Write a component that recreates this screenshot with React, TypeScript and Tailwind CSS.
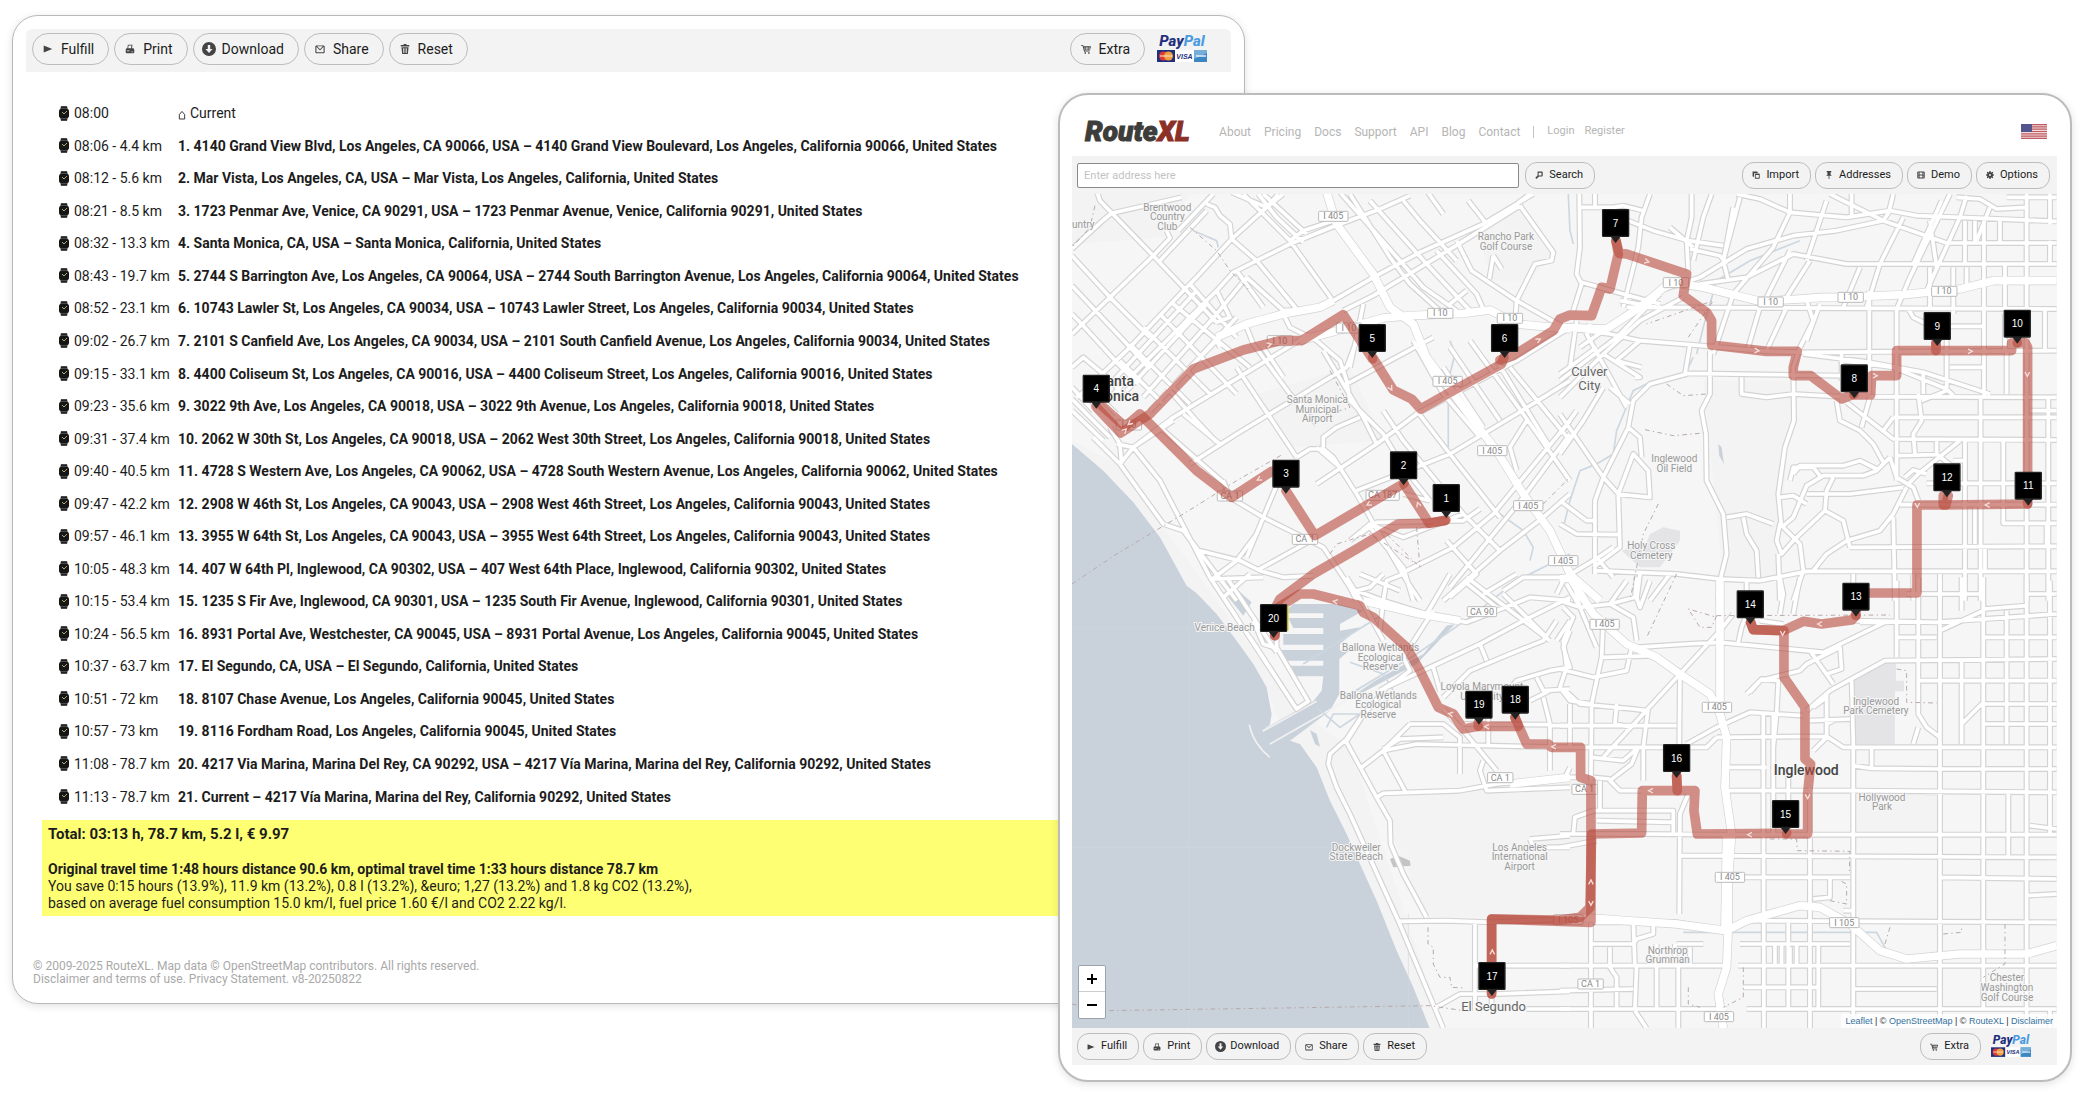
import React from "react";
import classNames from "clsx";

type IconName =
  | "play"
  | "print"
  | "download"
  | "mail"
  | "trash"
  | "cart"
  | "search"
  | "copy"
  | "pin"
  | "film"
  | "gear";

const ICONS: Record<IconName, React.ReactNode> = {
  play: <path d="M1 2v10l12-5z" />,
  print: (
    <path
      fillRule="evenodd"
      d="M4 1h6.500l-.7 5H12l1 2v4l-1 1H2l-1-1V8l1-2h1.300zM5 2.200 4.500 6h4L9 2.200zM2.500 9v1h4V9zM9 10.500v1h2v-1z"
    />
  ),
  download: (
    <path
      fillRule="evenodd"
      d="M7 0a7 7 0 1 1 0 14A7 7 0 0 1 7 0zM5.800 3v4H3.500L7 11l3.500-4H8.200V3z"
    />
  ),
  mail: (
    <path
      fillRule="evenodd"
      d="M1.500 2h11l1 1v9l-1 1h-11l-1-1V3zM2 4v7.500h10V4L7 9zM3 3.300l4 3.900 4-3.900z"
    />
  ),
  trash: (
    <path
      fillRule="evenodd"
      d="M5 0h4v1.500h4v2H1v-2h4zM2 4.500h10L11 14H3zM4.200 6l.4 6.500h.9L5.300 6zM6.500 6v6.500h1V6zM8.700 6l-.2 6.500h.9L9.800 6z"
    />
  ),
  cart: (
    <path
      fillRule="evenodd"
      d="M0 1.500h3l.5 1.700H14L12.500 9H5l.3 1H12v1H4.300L2.200 2.600H0zM5 4.500V8h1V4.500zM7 4.500V8h1V4.500zM9 4.500V8h1V4.500zM11 4.500V8h1V4.500zM5 11.500h2v2H5zM10 11.500h2v2h-2z"
    />
  ),
  search: (
    <path
      fillRule="evenodd"
      d="M5 1h7.500l1 1v6l-1 1.500H7L2.500 14 .5 12l4-4V1.500zM6.300 3v4.700h5V3z"
    />
  ),
  copy: (
    <path
      fillRule="evenodd"
      d="M1 1h8l1 1v1.500H5L3.500 5v5H2L1 9zM6 4.500h6.500l1 1v7l-1 1H6l-1-1v-7zM6.500 7v5H12V7z"
    />
  ),
  pin: <path d="M3 0h8v2H9.700v4L12 8.500H7.700V14H6.300V8.500H2L4.300 6V2H3z" />,
  film: (
    <path
      fillRule="evenodd"
      d="M1.500 1h11l1 1v10l-1 1h-11l-1-1V2zM4.500 2.500v3.700h5V2.500zM4.500 7.800v3.700h5V7.800zM1.800 3v1.300h1.400V3zM1.800 6.300v1.300h1.400V6.300zM1.800 9.600v1.300h1.400V9.600zM10.800 3v1.300h1.400V3zM10.800 6.300v1.300h1.400V6.300zM10.800 9.600v1.300h1.400V9.600z"
    />
  ),
  gear: (
    <path
      fillRule="evenodd"
      d="M6 0h2l.4 2 1.300.5L11.400 1.300 12.700 2.700 11.500 4.400 12 5.600 14 6v2l-2 .4-.5 1.300 1.200 1.700-1.400 1.300-1.700-1.200-1.200.5L8 14H6l-.4-2-1.300-.5-1.700 1.200-1.300-1.400 1.200-1.700L2 8.400 0 8V6l2-.4.5-1.300L1.300 2.600 2.700 1.300l1.700 1.200L5.600 2zM7 5.300a1.700 1.700 0 1 0 0 3.400 1.700 1.700 0 0 0 0-3.400z"
    />
  ),
};

interface ToolButtonProps {
  icon: IconName;
  small?: boolean;
  children: React.ReactNode;
}

const ToolButton = ({ icon, small, children }: ToolButtonProps) => (
  <button
    type="button"
    className={classNames(
      "flex shrink-0 items-center border border-[#bdbdbd] text-[#1c1c1c]",
      small
        ? "h-[27px] gap-[5px] rounded-xl pl-2 pr-[11px] text-[11px]"
        : "h-8 gap-[6px] rounded-2xl pl-2 pr-[14px] text-sm"
    )}
  >
    <span
      className={classNames(
        "flex items-center justify-center",
        small ? "w-[10px]" : "w-[14px]"
      )}
    >
      <svg
        viewBox="0 0 14 14"
        fill="#444"
        aria-hidden="true"
        className={classNames("shrink-0", {
          "size-[14px]": !small && icon === "download",
          "size-[11px]": small === (icon === "download"),
          "size-[10px]": !small && icon !== "download",
          "size-[8px]": small && icon !== "download",
        })}
      >
        {ICONS[icon]}
      </svg>
    </span>
    {children}
  </button>
);

const PaymentBadge = ({ className }: { className: string }) => (
  <svg viewBox="0 0 50 28" className={classNames("overflow-visible", className)} role="img" aria-label="PayPal">
    <text
      x="25"
      y="11"
      textAnchor="middle"
      fontFamily="Roboto, sans-serif"
      fontStyle="italic"
      fontWeight="800"
      fontSize="15"
      fill="#1f2f7d"
    >
      Pay<tspan fill="#4a9be0">Pal</tspan>
    </text>
    <rect y="15" width="18" height="12" fill="#22307c" />
    <circle cx="6.500" cy="21" r="4.500" fill="#dd3a35" />
    <circle cx="11.500" cy="21" r="4.500" fill="#f0a040" />
    <rect x="3" y="20" width="12" height="2" fill="#f6d9c0" opacity=".6" />
    <rect x="18" y="15" width="19" height="12" fill="#fff" />
    <text
      x="27.500"
      y="24"
      textAnchor="middle"
      fontFamily="Liberation Sans, sans-serif"
      fontStyle="italic"
      fontWeight="700"
      fontSize="7"
      fill="#1f2f7d"
    >
      VISA
    </text>
    <rect x="37" y="15" width="13" height="12" fill="#3c86c4" />
    <path d="M37 15h13v3l-13 6z" fill="#8fbfe4" opacity=".7" />
    <rect x="39" y="20" width="10" height="2" fill="#dcebf7" opacity=".8" />
  </svg>
);

const ActionBar = ({ small }: { small?: boolean }) => (
  <div
    className={classNames("flex items-center bg-[#f3f3f3]", {
      "h-[37px] gap-1 pl-[5px] pr-[26px]": small,
      "h-[43px] gap-[5px] rounded-t-md pb-[3px] pl-[6px] pr-6": !small,
    })}
  >
    <ToolButton icon="play" small={small}>Fulfill</ToolButton>
    <ToolButton icon="print" small={small}>Print</ToolButton>
    <ToolButton icon="download" small={small}>Download</ToolButton>
    <ToolButton icon="mail" small={small}>Share</ToolButton>
    <ToolButton icon="trash" small={small}>Reset</ToolButton>
    <span className="flex-1" />
    <ToolButton icon="cart" small={small}>Extra</ToolButton>
    <PaymentBadge className={small ? "ml-[6px] h-[23px] w-10" : "ml-[7px] h-7 w-[50px]"} />
  </div>
);

const STOPS: [string, string][] = [
  ["08:00", "Current"],
  ["08:06 - 4.4 km", "1. 4140 Grand View Blvd, Los Angeles, CA 90066, USA – 4140 Grand View Boulevard, Los Angeles, California 90066, United States"],
  ["08:12 - 5.6 km", "2. Mar Vista, Los Angeles, CA, USA – Mar Vista, Los Angeles, California, United States"],
  ["08:21 - 8.5 km", "3. 1723 Penmar Ave, Venice, CA 90291, USA – 1723 Penmar Avenue, Venice, California 90291, United States"],
  ["08:32 - 13.3 km", "4. Santa Monica, CA, USA – Santa Monica, California, United States"],
  ["08:43 - 19.7 km", "5. 2744 S Barrington Ave, Los Angeles, CA 90064, USA – 2744 South Barrington Avenue, Los Angeles, California 90064, United States"],
  ["08:52 - 23.1 km", "6. 10743 Lawler St, Los Angeles, CA 90034, USA – 10743 Lawler Street, Los Angeles, California 90034, United States"],
  ["09:02 - 26.7 km", "7. 2101 S Canfield Ave, Los Angeles, CA 90034, USA – 2101 South Canfield Avenue, Los Angeles, California 90034, United States"],
  ["09:15 - 33.1 km", "8. 4400 Coliseum St, Los Angeles, CA 90016, USA – 4400 Coliseum Street, Los Angeles, California 90016, United States"],
  ["09:23 - 35.6 km", "9. 3022 9th Ave, Los Angeles, CA 90018, USA – 3022 9th Avenue, Los Angeles, California 90018, United States"],
  ["09:31 - 37.4 km", "10. 2062 W 30th St, Los Angeles, CA 90018, USA – 2062 West 30th Street, Los Angeles, California 90018, United States"],
  ["09:40 - 40.5 km", "11. 4728 S Western Ave, Los Angeles, CA 90062, USA – 4728 South Western Avenue, Los Angeles, California 90062, United States"],
  ["09:47 - 42.2 km", "12. 2908 W 46th St, Los Angeles, CA 90043, USA – 2908 West 46th Street, Los Angeles, California 90043, United States"],
  ["09:57 - 46.1 km", "13. 3955 W 64th St, Los Angeles, CA 90043, USA – 3955 West 64th Street, Los Angeles, California 90043, United States"],
  ["10:05 - 48.3 km", "14. 407 W 64th Pl, Inglewood, CA 90302, USA – 407 West 64th Place, Inglewood, California 90302, United States"],
  ["10:15 - 53.4 km", "15. 1235 S Fir Ave, Inglewood, CA 90301, USA – 1235 South Fir Avenue, Inglewood, California 90301, United States"],
  ["10:24 - 56.5 km", "16. 8931 Portal Ave, Westchester, CA 90045, USA – 8931 Portal Avenue, Los Angeles, California 90045, United States"],
  ["10:37 - 63.7 km", "17. El Segundo, CA, USA – El Segundo, California, United States"],
  ["10:51 - 72 km", "18. 8107 Chase Avenue, Los Angeles, California 90045, United States"],
  ["10:57 - 73 km", "19. 8116 Fordham Road, Los Angeles, California 90045, United States"],
  ["11:08 - 78.7 km", "20. 4217 Via Marina, Marina Del Rey, CA 90292, USA – 4217 Vía Marina, Marina del Rey, California 90292, United States"],
  ["11:13 - 78.7 km", "21. Current – 4217 Vía Marina, Marina del Rey, California 90292, United States"],
];

const WatchIcon = () => (
  <svg viewBox="0 0 10 15" className="h-[15px] w-[10px] shrink-0" aria-hidden="true">
    <path d="M2 0h6l1 4v7l-1 4H2l-1-4V4z" fill="#4a4a4a" />
    <path d="M2 1.500h6M2 13.500h6" stroke="#222" />
    <rect y="3" width="10" height="9" rx="2" fill="#161616" />
    <path d="M3 6l2 2 3-3" stroke="#b9a878" fill="none" />
  </svg>
);

const HomeIcon = () => (
  <svg viewBox="0 0 9 10" className="mr-1 inline h-[10px] w-2" aria-hidden="true">
    <path d="M1.500 9.500V4.500L4.500 1l3 3.500v5z" fill="none" stroke="#222" />
  </svg>
);

const Itinerary = () => (
  <section className="ml-3 mt-[15px] flex w-[59%] shrink-0 flex-col self-start rounded-[26px] border border-[#b9b9b9] bg-white px-[13px] pb-[17px] pt-[13px] shadow-[0_2px_8px_rgba(0,0,0,0.12)]">
    <ActionBar />
    <table className="ml-[33px] mt-[25px] h-[716px] border-collapse self-start whitespace-nowrap text-sm text-[#1c1c1c]">
      <tbody>
        {STOPS.map(([time, address], i) => (
          <tr key={address}>
            <td className="w-[119px] p-0">
              <span className="flex items-center gap-[5px]">
                <WatchIcon />
                {time}
              </span>
            </td>
            <td className={classNames("p-0", { "font-bold": i > 0 })}>
              {i === 0 ? <HomeIcon /> : null}
              {address}
            </td>
          </tr>
        ))}
      </tbody>
    </table>
    <div className="ml-4 mt-[7px] bg-[#ffff73] px-[6px] pb-1 pt-1 text-sm leading-[17px] text-[#1c1c1c]">
      <p className="mb-[17px] text-[15px] font-bold leading-5">Total: 03:13 h, 78.7 km, 5.2 l, € 9.97</p>
      <p className="font-bold">
        Original travel time 1:48 hours distance 90.6 km, optimal travel time 1:33 hours distance 78.7 km
      </p>
      <p>You save 0:15 hours (13.9%), 11.9 km (13.2%), 0.8 l (13.2%), &amp;euro; 1,27 (13.2%) and 1.8 kg CO2 (13.2%),</p>
      <p>based on average fuel consumption 15.0 km/l, fuel price 1.60 €/l and CO2 2.22 kg/l.</p>
    </div>
    <footer className="ml-[7px] mt-[44px] text-xs leading-[13px] text-[#a9a9a9]">
      <p>© 2009-2025 RouteXL. Map data © OpenStreetMap contributors. All rights reserved.</p>
      <p>Disclaimer and terms of use. Privacy Statement. v8-20250822</p>
    </footer>
  </section>
);

// Map drawing. Everything is in a 3x space, cut in four sheets that start at (x, y).
interface Sheet {
  x: number;
  y: number;
  roads: string;
  highways: string;
}

const SHEETS: Sheet[] = [
  {
    x: 0,
    y: 0,
    roads: `
      M66 205 L160 118 L185 98 L395 50 M140 30 L150 60 L310 225 L360 172 L350 150 M310 225 L180 350 L66 460
      M490 40 L385 150 M470 70 L495 80 L510 105 L540 130 L545 175 L620 240 L740 385 M66 225 L180 350 L300 470
      M66 315 L240 500 L300 565 M66 400 L100 435 L200 545 L265 610 M310 225 L500 425 M405 325 L440 290 L545 175 L650 80 L685 40
      M405 325 L240 500 L130 605 M330 240 L470 90 M66 560 L100 530 L160 580 L220 640 M545 35 L650 80 L700 40 M580 40 L720 180 L845 355
      M625 40 L680 110 L760 185 M640 40 L770 160 M850 360 L970 290 L1110 215 L1300 130 L1450 40 M1080 45 L990 85 L845 140 L720 190 L620 240 L550 275 L500 330 L300 530 L190 640
      M720 180 L760 150 L850 120 M1410 75 L1210 200 L970 345 L880 390 M1410 75 L1510 215 L1505 240 L1455 250 L1400 360 L1395 430
      M1255 60 L1310 130 M1400 70 L1440 40 M870 35 L980 160 L1120 320 L1220 390 M900 40 L1020 230 L1080 310 L1180 400
      M960 60 L1130 250 L1270 400 M1060 60 L1110 120 L1220 240 M1130 30 L1180 100 M1160 210 L1280 340 L1300 385 M1220 180 L1265 270 L1400 360 L1560 450
      M1250 330 L1200 370 M1330 225 L1318 295 M1330 225 L1355 265 M280 650 L500 400 L590 290 M230 630 L470 370 M300 690 L560 410
      M190 600 L440 330 M330 400 L560 640 M370 370 L600 560 M280 440 L480 640 M240 490 L420 670 M210 540 L340 670 M420 310 L560 470
      M500 425 L540 410 L500 330 M590 290 L700 390 L780 385 M560 270 L640 380 M440 540 L500 480 L510 500 M590 440 L610 490 L720 640 L800 730
      M700 400 L720 440 L800 480 L870 540 L890 600 L900 660 L1000 760 L1060 860 L1140 960 M250 800 L370 710 L640 545 L780 460
      M420 850 L560 760 L890 560 L920 480 M500 785 L440 720 L350 620 M330 740 L520 905 M400 700 L510 790 M560 560 L720 800 L740 830
      M640 500 L700 590 M890 610 L1150 470 M900 560 L930 420 L940 370 M980 790 L1100 700 L1400 540 L1560 440 M800 910 L980 790 L940 710 L820 510
      M740 830 L780 805 L820 805 L850 830 L920 940 L1000 1080 L1070 1200 L1110 1260 M820 800 L820 770 L860 740 L930 710 M920 930 L1200 820 L1400 700 L1560 600
      M1000 690 L1060 780 L1240 1000 L1350 1110 M1100 690 L1200 820 L1350 1010 M1180 560 L1300 740 M1090 480 L1180 640 L1290 770
      M1200 500 L1350 720 M1260 480 L1420 700 L1560 900 M1340 540 L1500 800 M1380 560 L1560 780 M1330 1000 L1560 720 M1200 1220 L1420 950 L1560 760
      M1400 870 L1380 800 L1430 720 M1050 1180 L1210 1100 L1330 1000 M1190 1080 L1280 1180 L1200 1250 M870 860 L800 800 M1140 960 L1060 940
      M520 900 L540 950 L640 1010 L760 1070 L820 1100 L900 1220 L920 1260 M690 890 L640 1010 L590 1130 M640 1010 L620 1060 L560 1140 L480 1200
      M450 1110 L570 1140 L630 1170 L700 1190 L790 1185 M620 1170 L800 1070 M930 1060 L980 1025 L1240 1020 L1290 985 M900 1080 L960 1030 L1060 1070 L1240 1000
      M200 790 L250 800 L330 900 L480 1190 M130 770 L210 850 L340 1030 L400 1050 L560 1260 M210 850 L250 800 L370 720 M180 740 L210 790 L215 850
      M66 620 L130 690 M66 690 L160 780 M80 650 L120 620 L200 700 M66 655 L180 770 M490 1195 L640 1190 M1000 1260 L1010 1200 L1060 1180 M930 1180 L1050 1230
      M1180 1260 L1350 1110 L1480 1010 L1560 940 M1360 1230 L1420 1190 L1560 1190 M1090 1260 L1060 1160 L960 1040
    `,
    highways: `
      M830 35 L860 130 L970 280 L1020 380 L1090 430 L1130 530 L1270 720 L1340 810 L1420 940 L1500 1050 L1570 1200
      M750 480 L880 445 L1000 412 L1080 405 L1240 398 L1320 388 L1400 430 L1560 445 M500 470 L590 430 L700 400 L810 380 L850 360
    `,
  },
  {
    x: 1530,
    y: 0,
    roads: `
      M58 40 L60 200 L50 280 L65 310 L40 390 M60 80 L160 80 L190 75 L250 90 M105 40 L105 80 M270 40 L245 110 L235 200 L190 380
      M205 120 L280 150 L385 180 L490 195 M395 40 L395 110 L380 180 L385 270 M455 40 L430 110 L400 240 M330 140 L400 200
      M530 40 L600 55 L690 95 L860 110 L990 90 L1070 105 L1490 122 M690 40 L690 95 L640 200 L520 340 M520 80 L500 190 L490 240 L505 300
      M540 50 L490 240 M810 40 L970 120 L1160 187 L1490 187 M875 40 L875 110 M800 60 L740 240 M1000 40 L985 100 M990 90 L970 120 L830 150 L700 165 L560 205 L420 290 L300 330 L60 500
      M1170 40 L1050 290 L1010 385 M1145 60 L1060 250 M1220 45 L1200 110 L1100 330 M1190 50 L1260 55 L1310 85 L1400 80 M1340 50 L1490 50 M1290 80 L1250 180
      M390 205 L480 225 L500 250 M420 310 L560 290 L700 220 L860 250 L1490 250 M620 350 L690 210 M750 240 L680 350 M900 260 L850 380 M1030 110 L960 250 L920 380
      M740 360 L760 420 L720 500 L700 560 L702 720 L675 800 L655 940 L665 1040 M200 380 L1490 385 M600 380 L565 500 M680 380 L620 510 M780 370 L740 480 M520 340 L460 520
      M0 440 L150 460 L240 480 L390 492 L620 512 L730 515 L1490 510 M0 600 L170 470 L300 340 M0 650 L130 520 L240 420 L370 350 M0 580 L110 500 M90 430 L80 460 L200 680
      M50 420 L30 560 M180 360 L290 380 M65 305 L190 340 L300 370 M240 480 L170 540 L245 560 M130 520 L240 590 L225 590 M150 620 L210 670
      M375 580 L390 492 M375 578 L840 585 M380 580 L270 610 L220 660 L205 740 L130 890 L105 960 L105 1180 M450 510 L450 640 L425 690 L438 760 L440 900 L490 1000 L500 1120 L480 1200 L475 1260
      M545 590 L545 640 L620 650 L700 640 L840 648 M930 648 L1490 650 M830 660 L840 720 L900 750 L940 790 L970 845 M930 650 L905 740 M845 520 L845 600 M730 520 L930 545 L1090 575 L1290 640
      M850 540 L1000 560 L1160 625 L1180 645 M928 330 L928 640 M1010 385 L1010 900 M1075 640 L1085 720 L1060 760 L1065 820 M1160 440 L1160 540 L1160 630 L1085 660
      M1160 437 L1270 437 M1170 560 L1270 560 M1045 385 L1060 410 L1100 430 M1090 570 L1090 640 M1110 260 L1110 385 M1180 260 L1180 400 M1220 260 L1220 310 M1335 250 L1335 300
      M1215 120 L1215 250 M1110 120 L1130 260 M1320 120 L1320 187 M1245 120 L1245 187 M1400 40 L1400 1260 M1470 40 L1470 130 M1470 180 L1470 250 M1272 120 L1272 650 M1335 310 L1335 385 M1335 400 L1335 510
      M1455 385 L1455 510 M1340 510 L1340 640 M1465 650 L1465 1260 M1262 650 L1262 1260 M1410 690 L1490 690 M1000 710 L1490 710 M970 750 L1000 710 M860 665 L1000 775 L1490 778 M1010 825 L1130 822
      M1130 780 L1130 820 L1180 860 M1330 780 L1330 1028 L1490 1028 M1215 780 L1215 1260 M1200 780 L1075 880 L1040 915 M1180 840 L1215 840 M1100 908 L1490 908 M1020 972 L1490 972 M1460 1028 L1460 1100
      M990 830 L1010 890 L1060 920 L1075 960 M1035 890 L1060 868 L1100 880 M990 830 L950 870 L910 885 L790 885 L740 915 L700 1010 L665 1040 M700 880 L720 855 L850 855 L900 840 L950 865
      M690 900 L700 860 L760 860 L780 885 M820 890 L800 930 L795 990 L850 1020 L870 1100 M660 950 L700 945 L740 970 M740 940 L870 940 L1030 920 M1040 920 L1000 1000 L960 1050 L860 1080 L800 1120 L760 1170
      M795 990 L700 1080 L665 1120 L650 1080 L660 1030 L720 1090 L730 1170 L700 1260 M870 1100 L1490 1097 M1000 1010 L1005 1260 M1245 980 L1245 1090 M1275 1100 L1275 1170 M500 1010 L560 1000 L640 1030
      M550 1010 L560 1060 L590 1110 L595 1190 M350 1180 L480 1195 L600 1200 L740 1172 L1490 1172 M1140 1180 L1140 1260 M560 1200 L560 1260 M880 1180 L880 1240 M0 700 L130 890 L175 940 L180 1100 L100 1160
      M0 760 L50 690 M0 820 L70 720 L130 620 M170 940 L270 950 L265 870 L220 820 L175 940 M205 740 L240 770 L245 830 M0 960 L80 1020 L105 1020 M0 1030 L50 1060 L180 1062 M110 1130 L160 1190 M100 1170 L350 1180
      M0 1200 L100 1140 L160 1100 M240 1180 L230 1260 M330 1180 L270 1260 M655 1120 L660 1260 M1060 1180 L1060 1260
    `,
    highways: `
      M0 440 L140 445 L240 380 L330 305 L430 320 L600 362 L720 355 L785 350 L850 350 L1030 342 L1200 325 L1300 300 L1490 300
      M0 1195 L40 1190 L120 1260
    `,
  },
  {
    x: 0,
    y: 1200,
    roads: `
      M480 -10 L740 385 L775 362 L680 200 L680 150 M530 -10 L680 215 M740 385 L600 170 M610 120 L640 190 L670 200 M600 -20 L520 50 L560 110 M890 -10 L940 70 L1000 180
      M920 30 L1000 60 L1130 100 L1250 125 L1340 90 L1440 50 L1560 60 M1000 -20 L960 20 L920 30 M1000 60 L990 150 M1150 90 L1060 230 L1080 270 L1040 300 L990 330
      M1200 -20 L1130 100 M1240 0 L1340 80 M1250 -10 L1500 180 M1300 40 L1400 -20 M1360 40 L1440 120 L1490 170 M1010 320 L1140 260 L1290 190 L1440 110 L1560 50
      M1180 350 L1260 270 L1380 220 L1480 180 L1520 120 M1290 190 L1310 240 M1150 260 L1170 330 M1560 150 L1540 200 L1560 260 L1500 270 L1400 300 L1350 360 M1460 290 L1480 330 L1560 325
      M1440 360 L1500 330 M1480 350 L1500 430 L1500 570 M1500 435 L1560 435 M1240 430 L1500 432 M1180 385 L1230 440 M1240 450 L1340 570 M1080 430 L1180 430 L1230 470 L1230 580 M1000 510 L1080 430
      M935 560 L1000 510 L1100 490 L1540 500 M1000 505 L1050 475 L1180 470 M1315 410 L1315 500 M890 485 L980 650 L1020 720 L1022 790 L1060 880 L1130 1010
      M940 400 L890 475 L840 520 L835 550 L860 620 L900 700 L1045 1020 L1180 1343 M885 490 L935 410 L1010 320 M1000 510 L1070 640 M980 650 L1000 638 L1230 630 L1340 610 L1560 590
      M1300 540 L1290 570 L1310 630 L1560 620 M1560 560 L1545 590 M1045 1022 L1190 1020 L1325 1025 L1560 1015 M1275 1020 L1275 1290 M1275 1155 L1560 1155 M1150 1285 L1230 1240 L1340 1240 L1560 1232 M1325 1240 L1325 1285 M1430 1285 L1560 1285
      M1440 775 L1560 765 M1440 775 L1450 800 L1560 800 M1520 180 L1560 120 M1540 0 L1520 40
    `,
    highways: `M940 60 L1110 100 L1230 120 M1380 610 L1560 590`,
  },
  {
    x: 1530,
    y: 1200,
    roads: `
      M0 60 L60 80 L110 200 M20 10 L60 80 L150 70 L200 0 M60 80 L40 0 M0 265 L100 290 L200 270 L215 200 M10 80 L40 110 L10 180 L20 260 L0 320 L30 360 L95 370
      M130 110 L125 230 L95 370 L93 600 M130 230 L280 225 M150 70 L220 110 L230 180 M230 -10 L225 50 L150 70 M200 190 L230 200 L380 190 L480 185 L740 210 L790 215 L985 120
      M270 0 L240 80 L230 50 M480 -10 L480 380 M480 150 L360 280 L130 530 M520 100 L480 150 M560 100 L545 140 L535 185 M360 280 L358 500 M265 380 L250 500 L250 600
      M10 325 L60 370 L220 385 L260 390 M0 435 L350 435 M0 500 L440 500 L470 470 M30 370 L30 500 M170 370 L165 430 L215 440 M235 500 L215 550 L150 600 L180 630 L245 630
      M95 530 L190 540 L235 500 M0 590 L50 590 M95 590 L150 595 M380 490 L470 440 L570 395 L730 405 M470 470 L800 467 L850 500 L1490 500 M560 340 L600 300 L720 270 L740 250 L840 200 L845 265 L800 280
      M750 210 L820 310 M570 335 L605 295 L655 300 L650 400 L640 500 M660 100 L670 40 L660 -10 M720 -10 L700 100 M600 120 L670 130 M740 390 L810 330 L975 240 L1490 235
      M640 405 L640 760 M610 400 L610 470 M750 420 L870 415 M760 380 L800 350 M800 340 L800 470 L760 510 M820 420 L800 430 M610 470 L612 1343 M500 560 L620 560 M685 560 L685 760 M500 630 L870 630 L1490 635
      M875 300 L880 480 L880 1343 M880 120 L1130 125 L1490 100 M900 125 L985 125 M1010 0 L1010 230 M1010 170 L1130 170 M1075 -10 L1075 400 L1100 440 L1140 470 M1075 440 L1060 490
      M1140 0 L1140 1343 M1140 150 L1270 90 M1270 -10 L1270 1280 M1270 85 L1400 75 M1400 -10 L1400 1343 M1470 0 L1470 760 M1205 -10 L1205 90 M1205 235 L1205 490 M1340 90 L1340 490 M1080 300 L1490 300
      M1205 430 L1265 370 L1490 370 M1275 430 L1490 430 M1040 40 L1270 40 M1400 40 L1490 40 M1270 170 L1490 170 M880 555 L935 563 L1130 565 L1490 565 M935 500 L935 560 M1095 635 L1140 635
      M0 760 L250 760 L500 762 L1490 762 M0 800 L110 780 M360 825 L1490 830 M750 620 L750 1343 M550 890 L870 890 M1140 890 L1490 895 M810 890 L810 950 L760 955 M1400 945 L1490 940 M1410 735 L1490 745
      M100 690 L340 690 L340 760 M110 720 L340 725 M40 760 L45 710 L100 690 M385 640 L360 700 L358 1000 M360 825 L500 825 M100 1025 L350 1025 L490 1050 M550 1020 L1490 1025
      M93 1030 L93 1343 M93 1090 L220 1090 L230 1075 L280 1060 L280 1025 M150 1100 L150 1160 L170 1190 L170 1280 M220 1020 L225 1160 M0 1155 L500 1155 M230 1155 L225 1280 M0 1230 L220 1225 M0 1285 L500 1285
      M290 1090 L290 1280 M345 1090 L345 1155 M350 1090 L430 1090 M390 1100 L390 1150 M355 1160 L355 1343 M540 1090 L870 1090 M535 1155 L1490 1155 M550 1220 L770 1220 M560 1285 L1490 1285 M685 1025 L685 1280 M645 1090 L645 1155
      M665 1090 L665 1155 M710 1090 L710 1155 M690 1100 L690 1160 M775 1090 L775 1280 M885 1225 L1130 1225 M1345 640 L1345 830 M225 1290 L260 1343 M120 600 L120 690 M850 990 L880 990 M1470 1285 L1470 1343
    `,
    highways: `
      M30 -10 L100 100 L200 190 L290 230 L360 280 L450 340 L480 400 L500 470 L495 620 L515 760 L505 900 L505 1040 L500 1160 L475 1240 L490 1343
      M60 1010 L200 1020 L350 1030 L500 1050 L560 1020 L720 975 L780 980 L870 1030 L960 1110 L1040 1135 L1200 1120 L1400 1120 L1490 1095
      M480 -10 L480 380 M500 760 L495 1040
    `,
  },
];

const ROUTE_LEGS = [
  "M675 1365 L672 1290 L690 1255 L790 1180 L920 1105 L1045 1030 L1135 1028 L1185 1020",
  "M1188 1018 L1138 1028 L1062 910",
  "M1062 908 L795 1065 L708 930",
  "M700 870 L665 872 L545 950 L440 870 L270 700 L225 738 L150 670",
  "M138 678 L212 757 L300 700 L430 565 L580 508 L690 480 L755 480 L880 402 L968 535",
  "M968 530 L1030 628 L1085 655 L1112 685 L1200 635 L1355 550 L1362 530",
  "M1350 538 L1390 525 L1510 450 L1530 415 L1560 403 L1625 405 L1655 320 L1680 325 L1705 220 L1698 180",
  "M1698 180 L1708 218 L1730 220 L1910 280 L1900 345 L1970 395 L1985 420 L1985 493 L2150 512 L2242 512 L2230 560 L2230 585 L2282 585 L2375 655 L2412 640",
  "M2412 643 L2462 643 L2465 585 L2540 585 L2540 510 L2658 510 L2658 485",
  "M2658 490 L2658 510 L2885 510 L2885 487 L2902 487",
  "M2902 487 L2925 485 L2933 500 L2933 970",
  "M2933 970 L2680 973 L2680 945",
  "M2695 945 L2688 973 L2601 973 L2601 1237 L2420 1237 L2418 1305",
  "M2418 1305 L2405 1318 L2315 1330 L2260 1322 L2200 1350 L2110 1347 L2102 1325",
  "M2102 1325 L2110 1347 L2202 1350 L2202 1490 L2265 1580 L2265 1735 L2282 1750 L2273 1840 L2273 1960 L2210 1960",
  "M2210 1958 L1942 1960 L1932 1890 L1935 1830 L1882 1830 L1880 1785",
  "M1880 1785 L1882 1830 L1777 1830 L1775 1957 L1625 1960 L1620 2180 L1590 2210 L1530 2218 L1325 2215 L1325 2440",
  "M1325 2440 L1325 2215 L1623 2225 L1623 1800 L1592 1790 L1592 1700 L1505 1700 L1495 1690 L1430 1690 L1395 1610",
  "M1395 1610 L1405 1637 L1285 1637 L1285 1625",
  "M1285 1637 L1240 1645 L1210 1600 L1165 1580 L1110 1470 L1070 1400 L970 1310 L940 1295 L930 1275 L790 1240 L750 1240 L685 1280 L674 1365",
];

// x, y, heading in degrees
const ARROWS = [
  [657, 492, -15], [1022, 622, 60], [1465, 478, -30], [240, 727, 140], [224, 750, -45],
  [628, 895, 150], [957, 970, 150], [1105, 972, -110], [1790, 242, 15], [2120, 510, 5],
  [2475, 585, 0], [2760, 512, 0], [2932, 580, 90], [2813, 973, 180], [2602, 973, 90],
  [2310, 1330, 180], [2198, 1357, 90], [2273, 1847, 90], [2100, 1962, 180], [1803, 1830, 180],
  [1623, 2105, -90], [1623, 2167, 90], [1327, 2315, -90], [1512, 1698, 180], [1311, 1638, 180],
  [1203, 1600, 190], [857, 1263, 190],
];

const SHIELDS: [string, number, number][] = [
  ["I 405", 850, 107], ["I 10", 690, 480], ["I 10", 897, 442], ["I 10", 1171, 398], ["I 10", 1380, 413],
  ["I 405", 1193, 602], ["I 405", 1327, 810], ["I 405", 1435, 975], ["I 405", 1540, 1140], ["I 10", 237, 733],
  ["CA 1", 540, 946], ["CA 187", 998, 944], ["CA 1", 765, 1076], ["I 10", 1878, 306], ["I 10", 2162, 364],
  ["I 10", 2402, 350], ["I 10", 2683, 332], ["CA 90", 1296, 1293], ["CA 1", 1351, 1791], ["I 105", 1555, 2217],
  ["I 405", 1664, 1331], ["I 405", 2001, 1580], ["CA 1", 1604, 1826], ["I 405", 2040, 2090], ["I 105", 2383, 2226],
  ["CA 1", 1622, 2410], ["I 405", 2007, 2508],
];

const PLACES: [string[], number, number][] = [
  [["untry"], 100, 132],
  [["Brentwood", "Country", "Club"], 352, 80],
  [["Rancho Park", "Golf Course"], 1368, 169],
  [["Santa Monica", "Municipal", "Airport"], 802, 657],
  [["Inglewood", "Oil Field"], 1873, 834],
  [["Holy Cross", "Cemetery"], 1804, 1096],
  [["Venice Beach"], 524, 1340],
  [["Ballona Wetlands", "Ecological", "Reserve"], 992, 1401],
  [["Ballona Wetlands", "Ecological", "Reserve"], 985, 1544],
  [["Loyola Marymount", "University"], 1296, 1518],
  [["Dockweiler", "State Beach"], 919, 2000],
  [["Los Angeles", "International", "Airport"], 1409, 2000],
  [["Inglewood", "Park Cemetery"], 2478, 1562],
  [["Hollywood", "Park"], 2496, 1850],
  [["Northrop", "Grumman"], 1853, 2309],
  [["Chester", "Washington", "Golf Course"], 2871, 2392],
];

// Stop number, horizontal center and top of its marker
const MARKERS = [
  [1, 1189, 911], [2, 1061, 813], [3, 708, 838], [4, 139, 583], [5, 967, 431],
  [6, 1364, 431], [7, 1697, 86], [8, 2413, 552], [9, 2662, 395], [10, 2902, 388],
  [11, 2935, 874], [12, 2691, 849], [13, 2418, 1207], [14, 2101, 1230], [15, 2207, 1859],
  [16, 1880, 1691], [17, 1326, 2345], [19, 1287, 1531], [18, 1396, 1516], [20, 671, 1271],
];

const BOUNDARIES = `
  M66 1210 L200 1120 L400 1000 L560 900 L700 820 M66 2470 L160 2490 L700 2482 L1140 2475 L1240 2490 M135 75 L120 140 L66 200
  M420 140 L500 210 L540 270 L600 330 M840 570 L900 680 L780 720 M840 1120 L860 1090 L960 1060 L1100 1150 L1000 1050 M1100 1040 L1110 1160
  M1480 970 L1560 890 M1915 470 L1990 360 L1790 430 M1850 610 L1900 645 L1970 640 M1785 747 L1870 765 L1960 757 M1825 970 L1780 1060 L1740 1260
  M1880 1180 L1790 1370 M2000 1305 L2520 1303 M2000 1305 L1985 1340 L1950 1340 L1915 1285 L2000 1310 M2540 1465 L2570 1470 L2570 1565 L2660 1567
  M1134 2240 L1134 2290 L1150 2300 L1150 2350 L1170 2390 L1200 2390 L1205 2420 L1240 2422 M2160 1975 L2240 1975 L2242 2010 L2400 2012 L2398 2080
  M2080 2360 L2080 2450 L2020 2480 M1915 2420 L1915 2470 L1950 2480 M2865 2230 L2865 2350 L2800 2390 M2520 2240 L2505 2290 M2680 2260 L2735 2255 L2735 2240
  M2340 2160 L2390 2170 L2390 2110 L2370 2100
`;

const CREEKS = `
  M1555 40 L1560 150 L1570 190 M1940 520 L1960 440 L2000 300 L2100 240 L2250 180 M1930 530 L1905 580 L1800 605 L1750 630 L1700 750 L1690 820 L1640 850 L1590 870 L1560 960 L1540 1040
  M1560 1120 L1400 1200 L1260 1310 L1100 1420 L900 1540 M430 150 L500 180 L505 200 M1200 480 L1215 520 L1195 600 L1195 800 M1350 1000 L1420 1050 L1450 1100 L1440 1140
  M760 1450 L1000 1300 M800 1580 L870 1640 L930 1600 L850 1600 L830 1640 M900 1445 L1000 1480 L1030 1530 M1900 2255 L2480 2255 L2510 2310
`;

const RoadLayer = ({ casing }: { casing?: boolean }) => (
  <g
    fill="none"
    stroke={casing ? "#d3d3d3" : "#fff"}
    strokeLinejoin="round"
  >
    {SHEETS.map((sheet) => (
      <g key={`${sheet.x}-${sheet.y}`} transform={`translate(${sheet.x} ${sheet.y})`}>
        <path d={sheet.roads} strokeWidth={casing ? 18 : 11} />
        <path d={sheet.highways} strokeWidth={casing ? 27 : 23} />
      </g>
    ))}
  </g>
);

interface CityLabelProps {
  x: number;
  y: number;
  size: number;
  bold?: boolean;
  children: string;
}

const CityLabel = ({ x, y, size, bold, children }: CityLabelProps) => (
  <text
    x={x}
    y={y}
    textAnchor="middle"
    fontSize={size}
    fontWeight={bold ? 500 : 400}
    fill={bold ? "#444" : "#666"}
    stroke="#f6f6f6"
    strokeWidth="6"
    paintOrder="stroke"
  >
    {children}
  </text>
);

const Map = () => (
  <svg
    viewBox="66 40 2955 2502"
    preserveAspectRatio="xMidYMid slice"
    className="block size-full"
    fontFamily="Roboto, sans-serif"
    role="img"
    aria-label="Route map of Los Angeles"
  >
    <rect x="66" y="40" width="2955" height="2505" fill="#f6f6f6" />
    <g fill="#f3f3f3">
      <path d="M66 40 H420 L340 170 L66 190Z M1270 130 L1410 75 L1510 220 L1440 300 L1330 300Z M1960 600 H2230 L2180 1200 H2020Z" />
      <path d="M980 1850 L1620 1800 V2210 L1130 2210Z M620 640 L900 560 L1000 780 L720 800Z M2400 1840 H2660 V1960 H2400Z" />
      <path d="M66 780 L200 850 L560 1340 L740 1585 L900 1700 L1180 2545 H1040 L640 1500 L400 1200Z" />
    </g>
    <g fill="#e4e4e7">
      <path d="M1840 1040 L1890 1050 L1890 1080 L1830 1160 L1770 1160 L1715 1110 L1790 1085 L1800 1060Z" />
      <path d="M2410 1500 L2510 1440 H2538 V1500 H2562 V1532 H2535 V1690 H2410Z" />
    </g>
    <g fill="#c9d1db">
      <path
        d="M66 790 L160 870 L250 965 L330 1070 L410 1215 L440 1238 L500 1300 L560 1380 L610 1450 L650 1520 L665 1600 L660 1632
          L638 1648 L790 1562 L815 1530 L820 1487 L740 1487 L720 1455 H820 V1440 H710 L695 1408 H820 V1392 H700 V1360 H820 V1342 H730 L715 1312 H820 V1298 H700 L730 1270 H865
          L940 1290 L870 1330 V1350 L930 1340 L870 1390 V1410 L910 1400 L868 1435 V1540 L840 1590 L720 1680 L750 1690 L800 1760 L840 1860 L890 1960 L930 2050 L980 2160 L1040 2310 L1090 2420 L1140 2545 H66Z"
      />
      <path d="M920 1530 L1120 1420 L1190 1335 L1215 1330 L1100 1450 L930 1540Z M780 1648 L800 1660 L810 1698 L795 1690Z" />
      <path d="M2005 790 L2015 800 L2022 850 L2008 825Z M535 1250 L560 1225 L605 1265 L580 1305Z" />
    </g>
    <path d="M598 1632 Q610 1690 660 1730 M638 1652 L800 1562 M660 1690 L870 1570 L1000 1480" fill="none" stroke="#f1f1f1" strokeWidth="5" />
    <path d="M1075 2200 V2545 M416 1220 V2545 M66 1340 H520 M66 2000 H880" stroke="#d1d8e0" strokeWidth="2" />
    <path d="M1020 2035 L1045 2025 L1080 2040 L1082 2055 L1030 2060Z" fill="#c4c4c4" />
    <path d={CREEKS} fill="none" stroke="#cdd7e0" strokeWidth="5" />
    <RoadLayer casing />
    <RoadLayer />
    <path d={BOUNDARIES} fill="none" stroke="#b9a9a9" strokeWidth="3" strokeDasharray="14 10 4 10" />

    {PLACES.map(([lines, x, y], i) => (
      <text
        key={i}
        textAnchor="middle"
        fontSize="30"
        fill="#999"
        stroke="#f6f6f6"
        strokeWidth="6"
        paintOrder="stroke"
      >
        {lines.map((line, n) => (
          <tspan key={line} x={x} y={y + 10 + n * 29}>
            {line}
          </tspan>
        ))}
      </text>
    ))}
    <CityLabel x={198} y={616} size={42} bold>Santa</CityLabel>
    <CityLabel x={198} y={662} size={42} bold>Monica</CityLabel>
    <CityLabel x={1618} y={586} size={39}>Culver</CityLabel>
    <CityLabel x={1618} y={627} size={39}>City</CityLabel>
    <CityLabel x={2269} y={1784} size={42} bold>Inglewood</CityLabel>
    <CityLabel x={1331} y={2491} size={39}>El Segundo</CityLabel>

    {SHIELDS.map(([name, x, y]) => {
      const width = 28 + name.length * 12;
      return (
        <g key={`${name}-${x}`}>
          <rect x={x - width / 2} y={y - 15} width={width} height="30" rx="3" fill="#fff" stroke="#bbb" strokeWidth="3" />
          <text x={x} y={y + 9} textAnchor="middle" fontSize="27" fill="#888">
            {name}
          </text>
        </g>
      );
    })}

    <g fill="none" stroke="#b7493c" strokeOpacity="0.6" strokeWidth="29" strokeLinecap="round" strokeLinejoin="round">
      {ROUTE_LEGS.map((leg) => (
        <path key={leg} d={leg} />
      ))}
    </g>
    <g fill="none" stroke="#f6dedb" strokeWidth="4">
      {ARROWS.map(([x, y, heading]) => (
        <path key={`${x}-${y}`} d="M-6 -7 L7 0 L-6 7" transform={`translate(${x} ${y}) rotate(${heading})`} />
      ))}
    </g>

    <path d="M714 1275 V1350" stroke="#e6e04a" strokeWidth="5" />
    {MARKERS.map(([stop, x, y]) => (
      <g key={stop} transform={`translate(${x} ${y})`}>
        <path d="M-17 79 L0 101 L17 79Z" fill="#222" />
        <rect x="-39" y="1" width="78" height="80" rx="2" fill="#000" stroke="#222" strokeWidth="4" />
        <text y="52" textAnchor="middle" fontFamily="Liberation Sans, sans-serif" fontSize="30" fill="#fff">
          {stop}
        </text>
      </g>
    ))}
  </svg>
);

const Flag = () => (
  <svg viewBox="0 0 26 15" className="h-[15px] w-[26px]" aria-hidden="true">
    <rect width="26" height="15" fill="#f0dcdc" />
    <path
      d="M0 .6h26M0 2.900h26M0 5.200h26M0 7.500h26M0 9.800h26M0 12.100h26M0 14.400h26"
      stroke="#bf5a60"
      strokeWidth="1.200"
    />
    <rect width="11" height="8" fill="#54558c" />
  </svg>
);

const NAV_LINKS = ["About", "Pricing", "Docs", "Support", "API", "Blog", "Contact"];

const MapLink = ({ children }: { children: string }) => (
  <a href="#" className="text-[#3572a0]">
    {children}
  </a>
);

const Planner = () => (
  <section className="relative -ml-[187px] mr-[18px] mt-[93px] min-w-0 flex-1 self-start rounded-[30px] border-2 border-[#bcbcbc] bg-white pb-[15px] pl-3 pr-[13px] shadow-[0_2px_8px_rgba(0,0,0,0.12)]">
    <header className="flex h-[61px] items-center pl-[13px] pr-[10px] pt-3">
      <h1 className="w-[134px] text-[28px] font-black italic leading-none text-[#3d3d3a] [-webkit-text-stroke:1px]">
        Route<span className="text-[#8c2f27]">XL</span>
      </h1>
      <nav className="flex items-center gap-[13px] text-xs text-[#b5b5b5]">
        {NAV_LINKS.map((link) => (
          <a key={link} href="#">
            {link}
          </a>
        ))}
        <span className="h-3 w-px bg-[#c4c4c4]" />
        <span className="flex gap-[10px] text-[11px]">
          <a href="#">Login</a>
          <a href="#">Register</a>
        </span>
      </nav>
      <button type="button" aria-label="Language: English" className="ml-auto">
        <Flag />
      </button>
    </header>

    <form className="flex h-[38px] items-center gap-[6px] bg-[#f3f3f3] pl-[5px] pr-[7px]" onSubmit={(e) => e.preventDefault()}>
      <input
        type="text"
        aria-label="Address"
        placeholder="Enter address here"
        className="h-[25px] w-5/11 rounded-xs border border-[#8a8a8a] bg-white px-[6px] text-[11px] placeholder:text-[#c2c2c2]"
      />
      <ToolButton icon="search" small>Search</ToolButton>
      <div className="ml-auto flex gap-1">
        <ToolButton icon="copy" small>Import</ToolButton>
        <ToolButton icon="pin" small>Addresses</ToolButton>
        <ToolButton icon="film" small>Demo</ToolButton>
        <ToolButton icon="gear" small>Options</ToolButton>
      </div>
    </form>

    <div className="relative h-[834px] overflow-hidden">
      <Map />
      <div className="absolute bottom-[9px] left-[6px] flex w-7 flex-col divide-y divide-[#ccc] rounded-xs border border-[#9aa3ad] bg-white text-black">
        <button type="button" aria-label="Zoom in" className="flex h-[26px] items-center justify-center">
          <svg viewBox="0 0 12 12" className="size-3">
            <path d="M6 1v10M1 6h10" stroke="#000" strokeWidth="2" />
          </svg>
        </button>
        <button type="button" aria-label="Zoom out" className="flex h-[26px] items-center justify-center">
          <svg viewBox="0 0 12 12" className="size-3">
            <path d="M1 6h10" stroke="#000" strokeWidth="2" />
          </svg>
        </button>
      </div>
      <p className="absolute bottom-0 right-0 whitespace-nowrap bg-white/80 px-1 font-['Liberation_Sans',sans-serif] text-[9px] leading-[14px] text-[#333]">
        <MapLink>Leaflet</MapLink> | © <MapLink>OpenStreetMap</MapLink> | © <MapLink>RouteXL</MapLink> |{" "}
        <MapLink>Disclaimer</MapLink>
      </p>
    </div>
    <ActionBar small />
  </section>
);

const App = () => (
  <main className="flex min-h-screen items-start bg-white font-[Roboto,sans-serif]">
    <Itinerary />
    <Planner />
  </main>
);

export default App;
